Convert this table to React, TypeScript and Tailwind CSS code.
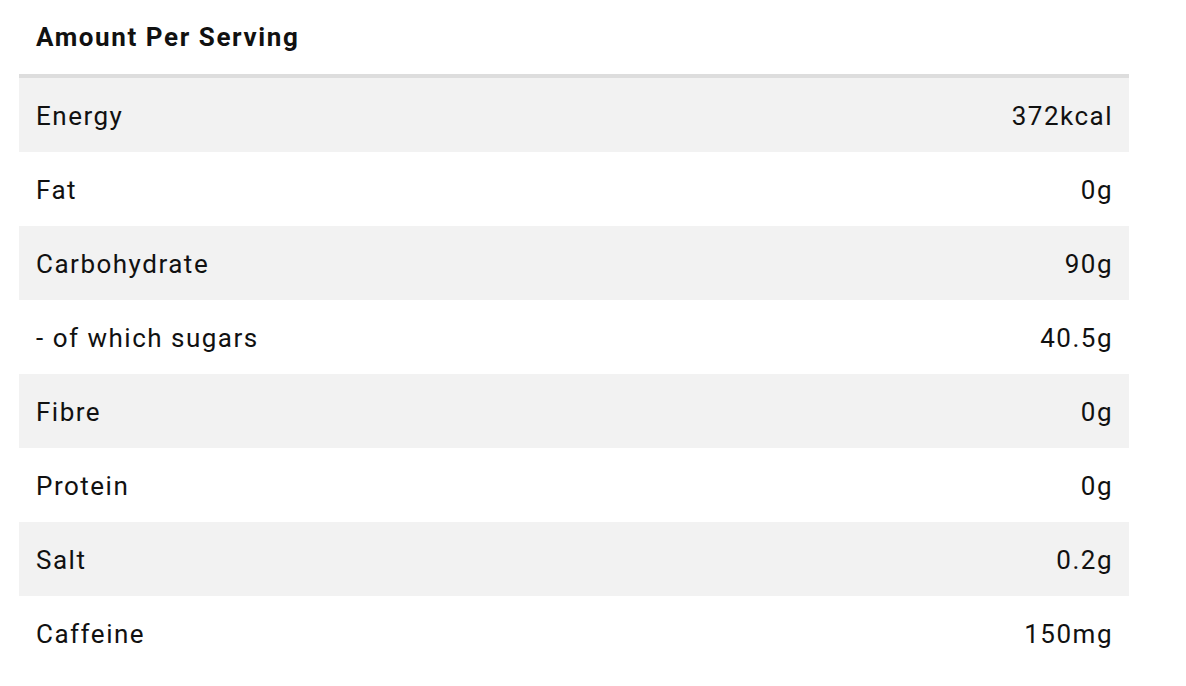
import React from "react";

const rows: [string, string][] = [
  ["Energy", "372kcal"],
  ["Fat", "0g"],
  ["Carbohydrate", "90g"],
  ["- of which sugars", "40.5g"],
  ["Fibre", "0g"],
  ["Protein", "0g"],
  ["Salt", "0.2g"],
  ["Caffeine", "150mg"],
];

export default function App() {
  return (
    <div className="w-[1186px] h-[686px] bg-white text-[#111111]" style={{ fontFamily: "Roboto, 'Liberation Sans', sans-serif" }}>
      <div className="ml-[19px] w-[1110px]">
        <div className="h-[74px] flex items-center pl-[17px] pt-[1px] text-[26px] font-bold tracking-[1.6px]">Amount Per Serving</div>
        <div className="h-[4px] bg-[#dddddd]" />
        {rows.map(([k, v], i) => (
          <div
            key={k}
            className={`h-[74px] flex items-center justify-between pl-[17px] pr-[16px] pt-[3px] text-[26px] tracking-[1.5px] ${i % 2 === 0 ? "bg-[#f2f2f2]" : "bg-white"}`}
          >
            <span>{k}</span>
            <span>{v}</span>
          </div>
        ))}
      </div>
    </div>
  );
}
